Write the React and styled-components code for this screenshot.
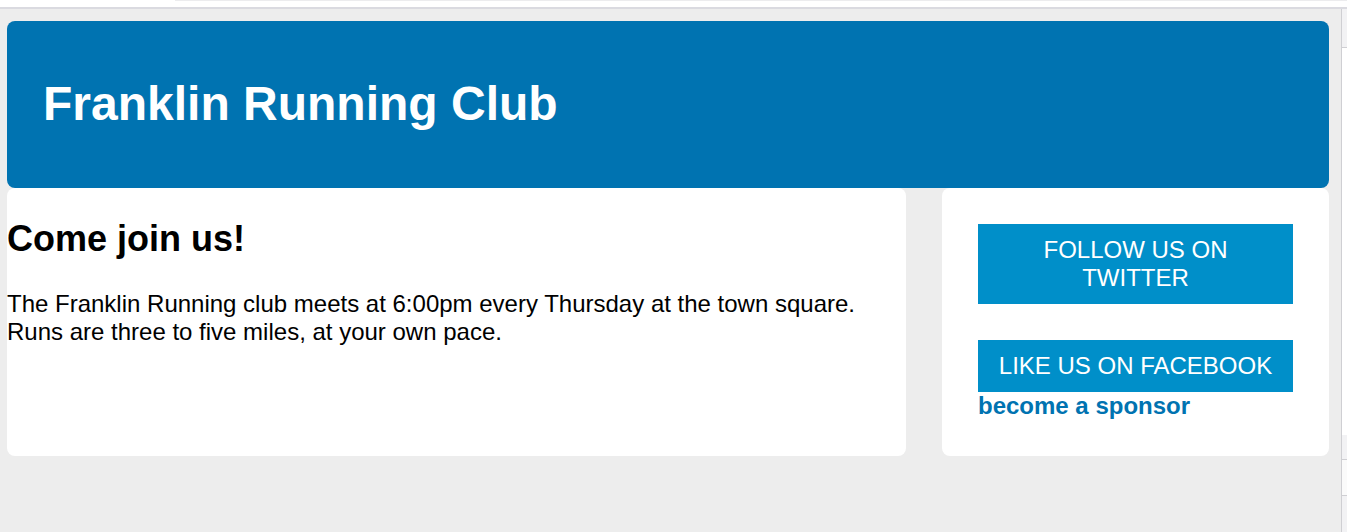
import React from "react";
import styled, { createGlobalStyle } from "styled-components";

const Global = createGlobalStyle`
  html, body { margin: 0; padding: 0; background: #ededed; }
  body { font-family: "Liberation Sans", Arial, sans-serif; font-size: 24px; color: #000; }
  * { box-sizing: border-box; }
`;

const Frame = styled.div`
  width: 1347px;
  height: 532px;
  display: flex;
  flex-direction: column;
  overflow: hidden;
`;

const TopBar = styled.div`
  height: 9px;
  flex: none;
  background: #fff;
  border-bottom: 2px solid #dadae0;
  display: flex;
`;

const TopGap = styled.div`
  width: 175px;
`;

const TopTab = styled.div`
  flex: 1;
  border-top: 1px solid #ececee;
`;

const Body = styled.div`
  flex: 1;
  display: flex;
`;

const Main = styled.main`
  flex: 1;
  padding: 12px 12px 0 7px;
  display: flex;
  flex-direction: column;
`;

const SideStrip = styled.div`
  width: 6px;
  flex: none;
  border-left: 1px solid #cfcfd3;
  background: #f2f2f4;
  display: flex;
  flex-direction: column;
`;

const StripSeg = styled.div`
  height: ${(p) => p.$h}px;
  flex: none;
  border-bottom: ${(p) => (p.$line ? "1px solid #cfcfd3" : "none")};
  background: ${(p) => p.$bg || "transparent"};
`;

const Header = styled.header`
  background: #0073b1;
  border-radius: 8px;
  padding: 55px 36px 57px;
`;

const Title = styled.h1`
  margin: 0;
  font-size: 48px;
  font-weight: 700;
  color: #fff;
  line-height: normal;
`;

const Row = styled.div`
  display: grid;
  grid-template-columns: 1fr 387px;
  column-gap: 36px;
`;

const Card = styled.section`
  background: #fff;
  border-radius: 8px;
  padding: ${(p) => p.$pad};
`;

const Heading = styled.h2`
  margin: 30px 0 30px;
  font-size: 36px;
  font-weight: 700;
  line-height: normal;
`;

const Text = styled.p`
  margin: 0;
  line-height: normal;
`;

const SocialButton = styled.a`
  display: block;
  background: #008fc9;
  color: #fff;
  text-align: center;
  text-decoration: none;
  padding: 12px 10px;
  line-height: normal;
  margin-bottom: ${(p) => p.$mb || 0}px;
`;

const SponsorLink = styled.a`
  display: block;
  color: #0073b1;
  font-weight: 700;
  text-decoration: none;
  line-height: normal;
`;

export default function App() {
  return (
    <>
      <Global />
      <Frame>
        <TopBar>
          <TopGap />
          <TopTab />
        </TopBar>
        <Body>
          <Main>
            <Header>
              <Title>Franklin Running Club</Title>
            </Header>
            <Row>
              <Card $pad="0">
                <Heading>Come join us!</Heading>
                <Text>
                  The Franklin Running club meets at 6:00pm every Thursday at the town square.
                  <br />
                  Runs are three to five miles, at your own pace.
                </Text>
              </Card>
              <Card $pad="36px">
                <SocialButton href="#" $mb={36}>FOLLOW US ON TWITTER</SocialButton>
                <SocialButton href="#">LIKE US ON FACEBOOK</SocialButton>
                <SponsorLink href="#">become a sponsor</SponsorLink>
              </Card>
            </Row>
          </Main>
          <SideStrip>
            <StripSeg $h={39} $line />
            <StripSeg $h={387} $bg="#fff" />
            <StripSeg $h={25} $line $bg="#f2f2f4" />
            <StripSeg $h={36} $line $bg="#fafafa" />
          </SideStrip>
        </Body>
      </Frame>
    </>
  );
}
